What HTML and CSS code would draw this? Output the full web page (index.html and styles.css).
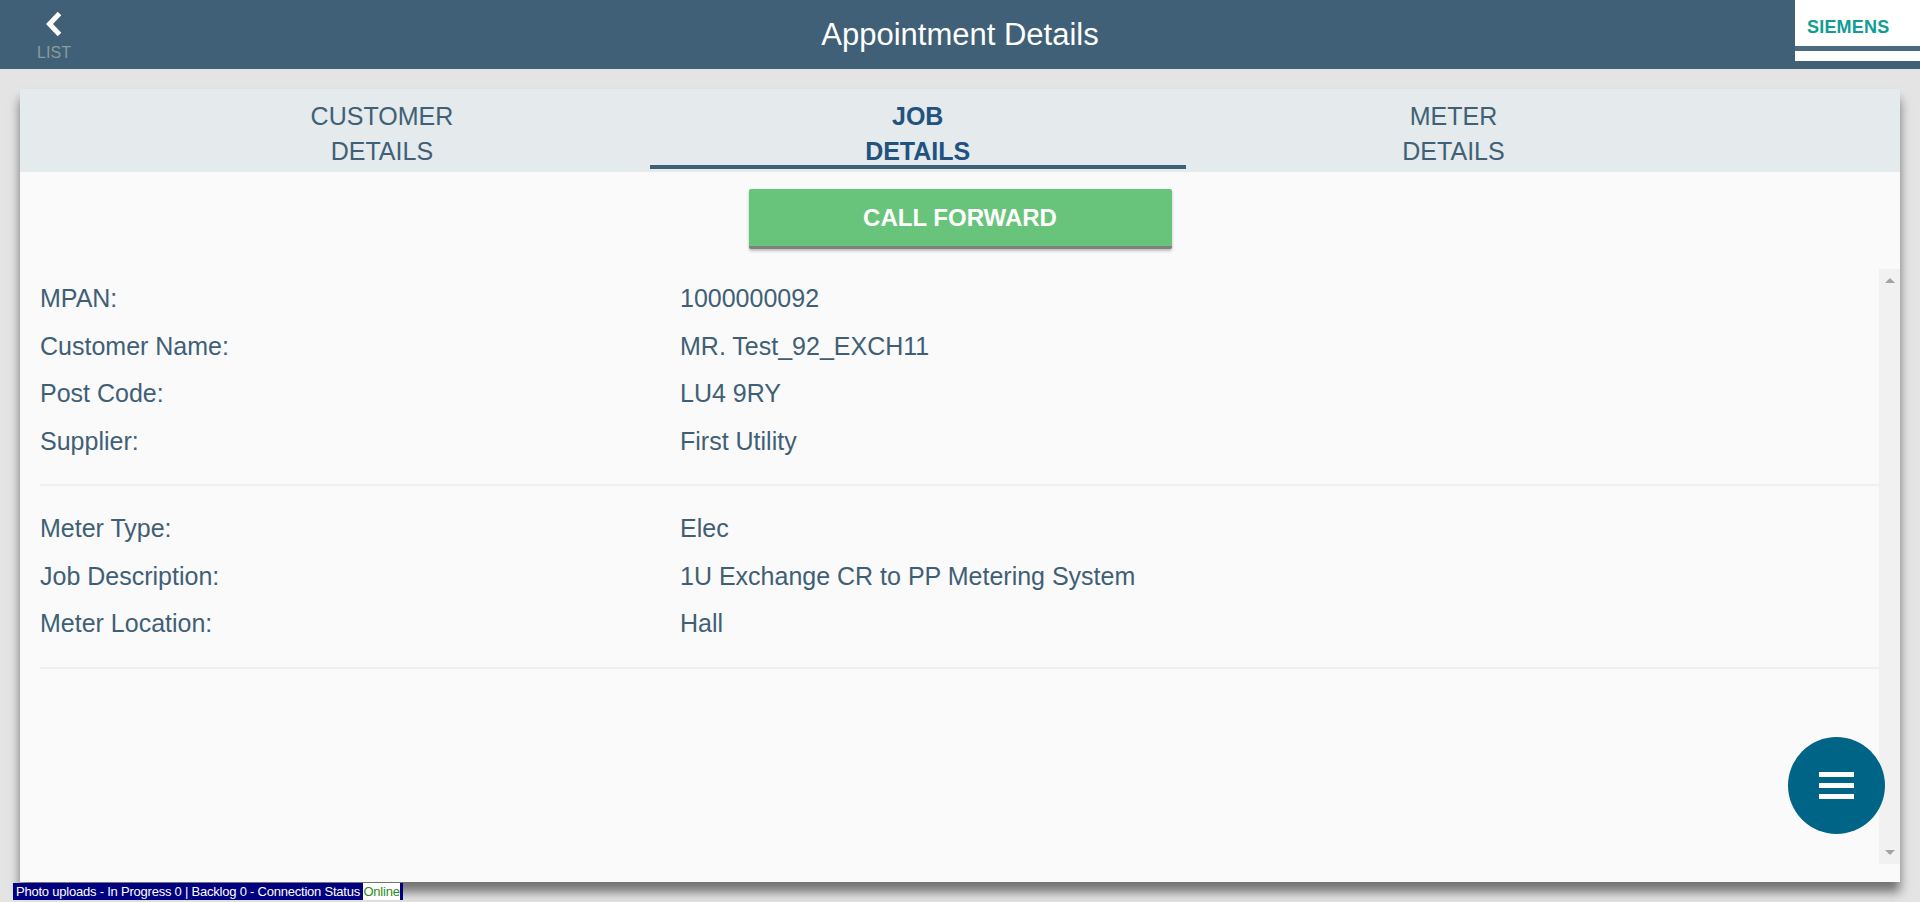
FILE: index.html
```html
<!DOCTYPE html>
<html lang="en">
<head>
    <meta charset="UTF-8">
    <meta name="viewport" content="width=device-width, initial-scale=1.0">
    <title>Appointment Details</title>
    <link rel="stylesheet" href="styles.css">
</head>
<body>
    <header class="topbar">
        <a class="back" href="#">
            <svg class="back-icon" width="18" height="26" viewBox="0 0 18 26">
                <path d="M14.5 2.5 L4.5 13 L14.5 23.5" fill="none" stroke="#fff" stroke-width="5"/>
            </svg>
            <span class="back-label">LIST</span>
        </a>
        <h1 class="title">Appointment Details</h1>
        <div class="logo">
            <div class="logo-name">SIEMENS</div>
            <div class="logo-band"></div>
        </div>
    </header>

    <main class="card">
        <nav class="tabs">
            <a class="tab" href="#">CUSTOMER<br>DETAILS</a>
            <a class="tab active" href="#">JOB<br>DETAILS</a>
            <a class="tab" href="#">METER<br>DETAILS</a>
        </nav>

        <div class="actions">
            <button type="button" class="call-btn">CALL FORWARD</button>
        </div>

        <div class="scroll-area">
            <div class="details">
                <section class="block">
                    <div class="row"><span class="label">MPAN:</span><span>1000000092</span></div>
                    <div class="row"><span class="label">Customer Name:</span><span>MR. Test_92_EXCH11</span></div>
                    <div class="row"><span class="label">Post Code:</span><span>LU4 9RY</span></div>
                    <div class="row"><span class="label">Supplier:</span><span>First Utility</span></div>
                </section>
                <section class="block">
                    <div class="row"><span class="label">Meter Type:</span><span>Elec</span></div>
                    <div class="row"><span class="label">Job Description:</span><span>1U Exchange CR to PP Metering System</span></div>
                    <div class="row"><span class="label">Meter Location:</span><span>Hall</span></div>
                </section>
            </div>
            <div class="scrollbar">
                <span class="arrow-up"></span>
                <span class="arrow-down"></span>
            </div>
        </div>

        <button type="button" class="fab" aria-label="Menu">
            <span class="fab-line"></span>
            <span class="fab-line"></span>
            <span class="fab-line"></span>
        </button>
    </main>

    <div class="status">Photo uploads - In Progress 0 | Backlog 0 - Connection Status <span class="online">Online</span></div>
</body>
</html>
```

FILE: styles.css
```css
html, body {
    height: 100%;
}
body {
    font-family: "Liberation Sans", Arial, sans-serif;
    margin: 0;
    background-color: #e4e4e4;
    color: #3f5f76;
    overflow: hidden;
}
.topbar {
    display: flex;
    align-items: flex-start;
    height: 69px;
    background-color: #3f6076;
}
.back {
    display: flex;
    flex-direction: column;
    align-items: center;
    width: 32px;
    margin-left: 38px;
    padding-top: 11px;
    text-decoration: none;
}
.back-icon {
    display: block;
}
.back-label {
    margin-top: 7px;
    font-size: 16px;
    line-height: 17px;
    color: #8b9a9f;
}
.title {
    flex: 1;
    margin: 0;
    padding-left: 55px;
    font-size: 31px;
    font-weight: normal;
    line-height: 69px;
    text-align: center;
    color: #fff;
}
.logo {
    width: 125px;
    height: 61px;
    background-color: #fff;
}
.logo-name {
    height: 46px;
    padding: 17px 0 0 12px;
    box-sizing: border-box;
    font-size: 18px;
    font-weight: bold;
    letter-spacing: 0.2px;
    line-height: 20px;
    color: #0f9d94;
}
.logo-band {
    height: 5px;
    background-color: #4a6a80;
}
.card {
    position: relative;
    display: flex;
    flex-direction: column;
    height: 793px;
    margin: 20px 20px 0;
    background-color: #fafafa;
    box-shadow: 0 10px 10px rgba(0, 0, 0, 0.5);
}
.tabs {
    display: flex;
    height: 83px;
    background-color: #e5eaec;
}
.tab {
    width: 28.5%;
    padding-top: 10px;
    font-size: 25px;
    line-height: 35px;
    text-align: center;
    text-decoration: none;
    color: #3f6076;
}
.tab:first-child {
    margin-left: 5%;
}
.tab.active {
    height: 66px;
    border-bottom: 4px solid #3f6076;
    font-weight: bold;
    color: #22527f;
}
.actions {
    display: flex;
    justify-content: center;
    height: 97px;
    padding-top: 17px;
    box-sizing: border-box;
}
.call-btn {
    width: 423px;
    height: 60px;
    border: 0;
    border-bottom: 3px solid #808080;
    border-radius: 2px;
    background-color: #68c47a;
    box-shadow: 0 2px 3px rgba(0, 0, 0, 0.25);
    font-family: inherit;
    font-size: 24px;
    font-weight: bold;
    color: #fff;
    cursor: pointer;
}
.scroll-area {
    display: flex;
    height: 595px;
}
.details {
    flex: 1;
    padding: 6px 0 0 20px;
    font-size: 25px;
}
.block {
    padding-bottom: 19px;
    border-bottom: 2px solid #efefef;
}
.block + .block {
    padding-top: 19px;
}
.row {
    display: flex;
    line-height: 47.5px;
}
.label {
    width: 640px;
}
.scrollbar {
    display: flex;
    flex-direction: column;
    justify-content: space-between;
    align-items: center;
    width: 21px;
    padding: 9px 0;
    box-sizing: border-box;
    background-color: #f1f1f1;
}
.arrow-up {
    border-left: 5px solid transparent;
    border-right: 5px solid transparent;
    border-bottom: 5px solid #a3a3a3;
}
.arrow-down {
    border-left: 5px solid transparent;
    border-right: 5px solid transparent;
    border-top: 5px solid #a3a3a3;
}
.fab {
    position: absolute;
    left: 1768px;
    top: 648px;
    display: flex;
    flex-direction: column;
    justify-content: center;
    align-items: center;
    gap: 6px;
    width: 97px;
    height: 97px;
    padding: 0;
    border: 0;
    border-radius: 50%;
    background-color: #006487;
}
.fab-line {
    width: 35px;
    height: 5px;
    background-color: #fff;
}
.status {
    position: absolute;
    left: 13px;
    top: 883px;
    height: 17px;
    padding: 0 3px;
    background-color: #000080;
    font-size: 13px;
    letter-spacing: -0.22px;
    line-height: 17px;
    white-space: nowrap;
    color: #fff;
}
.online {
    display: inline-block;
    background-color: #fff;
    color: #2e8b22;
}
```
